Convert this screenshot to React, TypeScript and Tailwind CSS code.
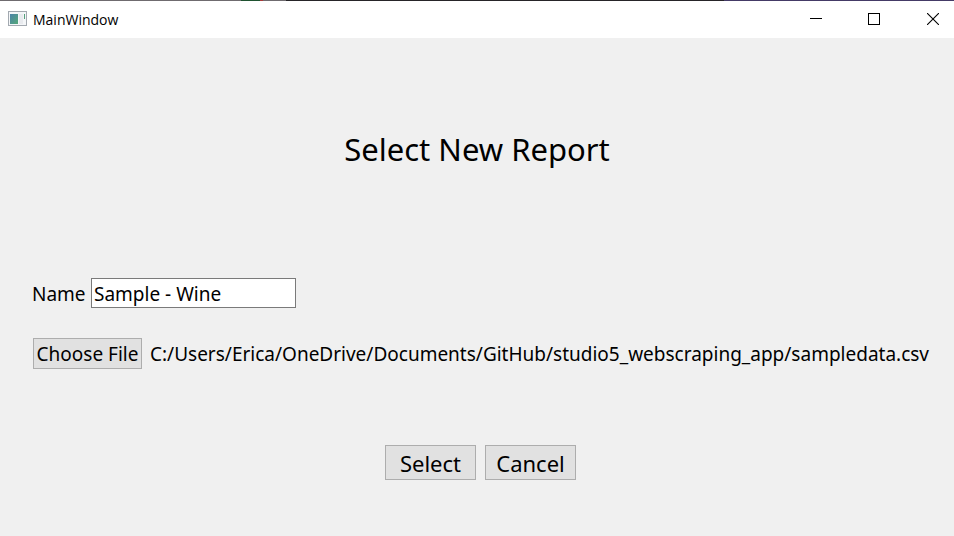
import React from "react";

const button =
  "flex items-center justify-center whitespace-nowrap border border-[#adadad] bg-[#e1e1e1] pt-0.5";

export default function App() {
  return (
    <div className="flex min-h-screen flex-col bg-[#f0f0f0] font-['Noto_Sans',sans-serif] text-black">
      <div className="flex h-px bg-[#443a66]">
        <div className="w-[241px] bg-[#6f6b6f]" />
        <div className="w-[19px] bg-[#1f5230]" />
        <div className="w-[3px] bg-[#a83a3a]" />
        <div className="w-[23px] bg-[#6f6b6f]" />
        <div className="w-[438px] bg-[#262428]" />
      </div>
      <header className="flex h-[37px] items-center bg-white pb-0.5 pl-2">
        <svg width="19" height="16" viewBox="0 0 19 16" aria-hidden="true">
          <defs>
            <linearGradient id="pane" x1="0" y1="0" x2="1" y2="1">
              <stop offset="0" stopColor="#4b83a8" />
              <stop offset="1" stopColor="#55a878" />
            </linearGradient>
          </defs>
          <rect x="0.5" y="0.5" width="18" height="14" fill="#f4f6f8" stroke="#a3a9b0" />
          <rect x="2" y="3" width="8" height="10" fill="url(#pane)" />
          <rect x="11" y="3" width="4" height="10" fill="#e8eaee" />
          <rect x="16" y="3" width="1" height="5" fill="#55a07c" />
        </svg>
        <span className="ml-1.5 pt-0.5 font-['Open_Sans',sans-serif] text-[14px] leading-5">MainWindow</span>
        <div className="ml-auto flex h-full items-center">
          <button aria-label="Minimize" className="flex h-full w-[58px] items-center justify-center">
            <svg width="12" height="12" viewBox="0 0 12 12" stroke="#000" fill="none"><path d="M0 5.5h12" /></svg>
          </button>
          <button aria-label="Maximize" className="flex h-full w-[58px] items-center justify-center">
            <svg width="12" height="12" viewBox="0 0 12 12" stroke="#000" fill="none"><rect x=".5" y=".5" width="11" height="11" /></svg>
          </button>
          <button aria-label="Close" className="flex h-full w-[51px] items-center justify-end pr-[15px]">
            <svg width="12" height="12" viewBox="0 0 12 12" stroke="#000" strokeWidth="1.1" fill="none"><path d="M0 0l12 12M12 0L0 12" /></svg>
          </button>
        </div>
      </header>
      <main className="flex flex-col">
        <h1 className="mt-[87px] text-center text-[31px] leading-[48px]">Select New Report</h1>
        <div className="mt-[105px] flex items-center pl-8">
          <label htmlFor="name" className="w-[59px] pt-0.5 text-[19px] leading-7">Name</label>
          <input id="name" defaultValue="Sample - Wine" className="h-[30px] w-[205px] border border-[#7a7a7a] bg-white px-0.5 pt-0.5 text-[19px]" />
        </div>
        <div className="mt-[30px] flex items-center gap-2 pl-[33px] text-[19px]">
          <button className={`${button} h-[31px] w-[109px]`}>Choose File</button>
          <span className="whitespace-nowrap pt-0.5">C:/Users/Erica/OneDrive/Documents/GitHub/studio5_webscraping_app/sampledata.csv</span>
        </div>
        <div className="mt-[76px] flex justify-center gap-[9px] pl-[7px] text-[22px]">
          <button className={`${button} h-[35px] w-[91px]`}>Select</button>
          <button className={`${button} h-[35px] w-[91px]`}>Cancel</button>
        </div>
      </main>
    </div>
  );
}
